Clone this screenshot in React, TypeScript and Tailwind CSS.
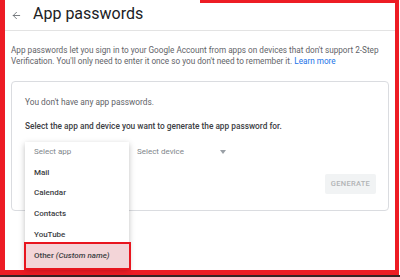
import { ArrowLeft } from "lucide-react"

const apps = ["Mail", "Calendar", "Contacts", "YouTube"]

function AppMenu() {
  return (
    <div className="absolute left-0 top-0 z-10 w-[104px] h-[126px] bg-white shadow-[0_2px_6px_rgba(0,0,0,0.25)] flex flex-col">
      <div className="h-[20.6px] shrink-0 flex items-center pl-[9px] text-[8px] text-[#80868b]">Select app</div>
      {apps.map((a) => (
        <div key={a} className="h-[20.6px] shrink-0 flex items-center pl-[9px] text-[8px] font-medium text-[#3c4043]">
          {a}
        </div>
      ))}
      <div className="relative -mt-[3px] -ml-[1px] -mr-[2px] h-[28px] shrink-0 flex items-center pl-[8px] bg-[#f3d5d8] border-2 border-[#e8161f] text-[8px] font-medium text-[#3c4043]">
        Other&nbsp;<span className="italic">(Custom name)</span>
      </div>
    </div>
  )
}

export default function App() {
  return (
    <div className="relative w-[400px] h-[277px] bg-white overflow-hidden font-['Roboto',sans-serif]">
      <div className="absolute top-0 left-[200px] right-[1px] h-[3px] bg-[#ed1c24]" />
      <div className="w-[399px] h-[275px] border-l-[5px] border-r-[4px] border-b-[5px] border-[#ed1c24] flex flex-col">
        <div className="h-[31px] shrink-0 flex items-center border-b border-[#e3e3e3]">
          <ArrowLeft className="ml-[6px] w-[11px] h-[11px] text-[#5f6368]" strokeWidth={1.8} />
          <h1 className="ml-[11px] -mt-[2px] text-[16px] leading-none text-[#202124]">App passwords</h1>
        </div>
        <p className="mt-[14px] ml-[6px] text-[8.2px] leading-[11px] text-[#5f6368] whitespace-nowrap">
          App passwords let you sign in to your Google Account from apps on devices that don't support 2-Step
          <br />
          Verification. You'll only need to enter it once so you don't need to remember it.{" "}
          <span className="text-[#1a73e8]">Learn more</span>
        </p>
        <div className="mt-[14px] ml-[6px] w-[378px] h-[130px] border border-[#dadce0] rounded-[4px] pl-[13px] pr-[12px] pt-[15px] flex flex-col">
          <div className="text-[8.3px] leading-[11px] text-[#5f6368]">You don't have any app passwords.</div>
          <div className="mt-[13px] text-[8.3px] leading-[11px] font-medium text-[#3c4043]">
            Select the app and device you want to generate the app password for.
          </div>
          <div className="mt-[10px] flex items-center h-[20px]">
            <div className="relative w-[104px] h-[20px] self-start">
              <AppMenu />
            </div>
            <div className="ml-[8px] w-[91px] flex items-center justify-between text-[8px] text-[#80868b]">
              <span>Select device</span>
              <span className="w-0 h-0 border-l-[3.5px] border-r-[3.5px] border-t-[4px] border-l-transparent border-r-transparent border-t-[#9aa0a6] mr-[2px]" />
            </div>
          </div>
          <div className="mt-[12px] flex justify-end">
            <div className="w-[51px] h-[20px] bg-[#f1f3f4] rounded-[2px] flex items-center justify-center text-[7.5px] font-medium tracking-[0.3px] text-[#b1b3b6]">
              GENERATE
            </div>
          </div>
        </div>
      </div>
      <div className="h-[2px] bg-[#3b2224]" />
    </div>
  )
}
